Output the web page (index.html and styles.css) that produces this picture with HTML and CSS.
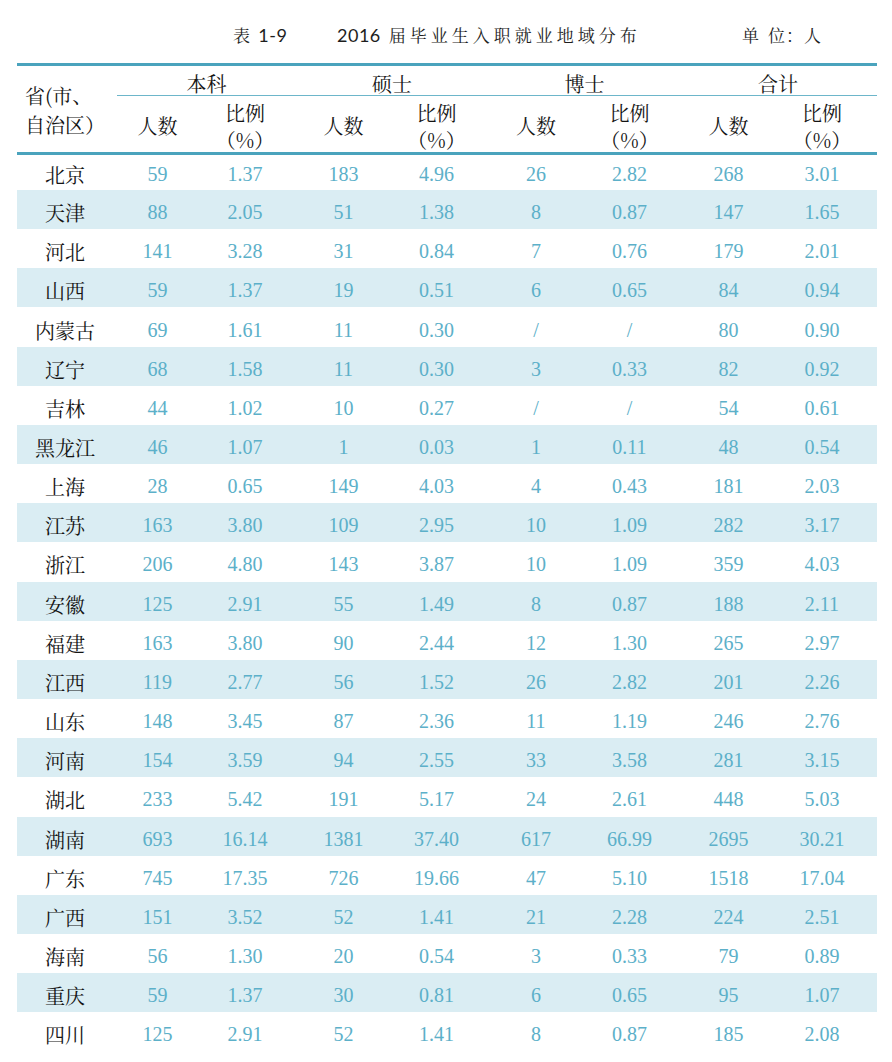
FILE: index.html
```html
<!DOCTYPE html>
<html lang="zh-CN">
<head>
<meta charset="utf-8">
<title>表 1-9 2016 届毕业生入职就业地域分布</title>
<link rel="stylesheet" href="styles.css">
</head>
<body>
<div class="page">
  <div class="title">
    <span class="t-no"><span class="cjk">表</span> <span class="lat">1-9</span></span>
    <span class="t-main"><span class="lat yr">2016</span><span class="cjk">届毕业生入职就业地域分布</span></span>
    <span class="t-unit"><span class="u1">单</span>位：人</span>
  </div>
  <div class="table">
    <div class="grid head">
      <div class="corner"><div class="corner-txt">省(市、<br>自治区）</div></div>
      <div class="grp g1">本科</div>
      <div class="grp g2">硕士</div>
      <div class="grp g3">博士</div>
      <div class="grp g4">合计</div>
      <div class="sub c1">人数</div><div class="sub c2">比例<br>（%）</div>
      <div class="sub c3">人数</div><div class="sub c4">比例<br>（%）</div>
      <div class="sub c5">人数</div><div class="sub c6">比例<br>（%）</div>
      <div class="sub c7">人数</div><div class="sub c8">比例<br>（%）</div>
    </div>
    <div class="rows">
      <div class="grid row"><div class="n">北京</div><div class="v c1">59</div><div class="v c2">1.37</div><div class="v c3">183</div><div class="v c4">4.96</div><div class="v c5">26</div><div class="v c6">2.82</div><div class="v c7">268</div><div class="v c8">3.01</div></div>
      <div class="grid row"><div class="n">天津</div><div class="v c1">88</div><div class="v c2">2.05</div><div class="v c3">51</div><div class="v c4">1.38</div><div class="v c5">8</div><div class="v c6">0.87</div><div class="v c7">147</div><div class="v c8">1.65</div></div>
      <div class="grid row"><div class="n">河北</div><div class="v c1">141</div><div class="v c2">3.28</div><div class="v c3">31</div><div class="v c4">0.84</div><div class="v c5">7</div><div class="v c6">0.76</div><div class="v c7">179</div><div class="v c8">2.01</div></div>
      <div class="grid row"><div class="n">山西</div><div class="v c1">59</div><div class="v c2">1.37</div><div class="v c3">19</div><div class="v c4">0.51</div><div class="v c5">6</div><div class="v c6">0.65</div><div class="v c7">84</div><div class="v c8">0.94</div></div>
      <div class="grid row"><div class="n">内蒙古</div><div class="v c1">69</div><div class="v c2">1.61</div><div class="v c3">11</div><div class="v c4">0.30</div><div class="v c5">/</div><div class="v c6">/</div><div class="v c7">80</div><div class="v c8">0.90</div></div>
      <div class="grid row"><div class="n">辽宁</div><div class="v c1">68</div><div class="v c2">1.58</div><div class="v c3">11</div><div class="v c4">0.30</div><div class="v c5">3</div><div class="v c6">0.33</div><div class="v c7">82</div><div class="v c8">0.92</div></div>
      <div class="grid row"><div class="n">吉林</div><div class="v c1">44</div><div class="v c2">1.02</div><div class="v c3">10</div><div class="v c4">0.27</div><div class="v c5">/</div><div class="v c6">/</div><div class="v c7">54</div><div class="v c8">0.61</div></div>
      <div class="grid row"><div class="n">黑龙江</div><div class="v c1">46</div><div class="v c2">1.07</div><div class="v c3">1</div><div class="v c4">0.03</div><div class="v c5">1</div><div class="v c6">0.11</div><div class="v c7">48</div><div class="v c8">0.54</div></div>
      <div class="grid row"><div class="n">上海</div><div class="v c1">28</div><div class="v c2">0.65</div><div class="v c3">149</div><div class="v c4">4.03</div><div class="v c5">4</div><div class="v c6">0.43</div><div class="v c7">181</div><div class="v c8">2.03</div></div>
      <div class="grid row"><div class="n">江苏</div><div class="v c1">163</div><div class="v c2">3.80</div><div class="v c3">109</div><div class="v c4">2.95</div><div class="v c5">10</div><div class="v c6">1.09</div><div class="v c7">282</div><div class="v c8">3.17</div></div>
      <div class="grid row"><div class="n">浙江</div><div class="v c1">206</div><div class="v c2">4.80</div><div class="v c3">143</div><div class="v c4">3.87</div><div class="v c5">10</div><div class="v c6">1.09</div><div class="v c7">359</div><div class="v c8">4.03</div></div>
      <div class="grid row"><div class="n">安徽</div><div class="v c1">125</div><div class="v c2">2.91</div><div class="v c3">55</div><div class="v c4">1.49</div><div class="v c5">8</div><div class="v c6">0.87</div><div class="v c7">188</div><div class="v c8">2.11</div></div>
      <div class="grid row"><div class="n">福建</div><div class="v c1">163</div><div class="v c2">3.80</div><div class="v c3">90</div><div class="v c4">2.44</div><div class="v c5">12</div><div class="v c6">1.30</div><div class="v c7">265</div><div class="v c8">2.97</div></div>
      <div class="grid row"><div class="n">江西</div><div class="v c1">119</div><div class="v c2">2.77</div><div class="v c3">56</div><div class="v c4">1.52</div><div class="v c5">26</div><div class="v c6">2.82</div><div class="v c7">201</div><div class="v c8">2.26</div></div>
      <div class="grid row"><div class="n">山东</div><div class="v c1">148</div><div class="v c2">3.45</div><div class="v c3">87</div><div class="v c4">2.36</div><div class="v c5">11</div><div class="v c6">1.19</div><div class="v c7">246</div><div class="v c8">2.76</div></div>
      <div class="grid row"><div class="n">河南</div><div class="v c1">154</div><div class="v c2">3.59</div><div class="v c3">94</div><div class="v c4">2.55</div><div class="v c5">33</div><div class="v c6">3.58</div><div class="v c7">281</div><div class="v c8">3.15</div></div>
      <div class="grid row"><div class="n">湖北</div><div class="v c1">233</div><div class="v c2">5.42</div><div class="v c3">191</div><div class="v c4">5.17</div><div class="v c5">24</div><div class="v c6">2.61</div><div class="v c7">448</div><div class="v c8">5.03</div></div>
      <div class="grid row"><div class="n">湖南</div><div class="v c1">693</div><div class="v c2">16.14</div><div class="v c3">1381</div><div class="v c4">37.40</div><div class="v c5">617</div><div class="v c6">66.99</div><div class="v c7">2695</div><div class="v c8">30.21</div></div>
      <div class="grid row"><div class="n">广东</div><div class="v c1">745</div><div class="v c2">17.35</div><div class="v c3">726</div><div class="v c4">19.66</div><div class="v c5">47</div><div class="v c6">5.10</div><div class="v c7">1518</div><div class="v c8">17.04</div></div>
      <div class="grid row"><div class="n">广西</div><div class="v c1">151</div><div class="v c2">3.52</div><div class="v c3">52</div><div class="v c4">1.41</div><div class="v c5">21</div><div class="v c6">2.28</div><div class="v c7">224</div><div class="v c8">2.51</div></div>
      <div class="grid row"><div class="n">海南</div><div class="v c1">56</div><div class="v c2">1.30</div><div class="v c3">20</div><div class="v c4">0.54</div><div class="v c5">3</div><div class="v c6">0.33</div><div class="v c7">79</div><div class="v c8">0.89</div></div>
      <div class="grid row"><div class="n">重庆</div><div class="v c1">59</div><div class="v c2">1.37</div><div class="v c3">30</div><div class="v c4">0.81</div><div class="v c5">6</div><div class="v c6">0.65</div><div class="v c7">95</div><div class="v c8">1.07</div></div>
      <div class="grid row"><div class="n">四川</div><div class="v c1">125</div><div class="v c2">2.91</div><div class="v c3">52</div><div class="v c4">1.41</div><div class="v c5">8</div><div class="v c6">0.87</div><div class="v c7">185</div><div class="v c8">2.08</div></div>
    </div>
  </div>
</div>
</body>
</html>
```

FILE: styles.css
```css
* { box-sizing: border-box; }
html, body { margin: 0; padding: 0; background: #ffffff; }
body {
  font-family: "Noto Serif CJK SC", "Noto Sans CJK SC", serif;
  color: #141414;
}
.page { width: 892px; }

/* title line */
.title {
  height: 63px;
  padding: 6px 0 0 233px;
  display: flex;
  align-items: center;
  font-size: 17px;
  color: #1e1e1e;
}
.title .cjk { letter-spacing: 4px; }
.title .lat { font-family: "Lato", "DejaVu Sans", sans-serif; font-size: 18px; letter-spacing: 0.5px; }
.title .yr { margin-right: 8px; }
.t-no { width: 104px; white-space: nowrap; }
.t-main { width: 405px; white-space: nowrap; }
.t-unit { white-space: nowrap; letter-spacing: 1px; }
.u1 { margin-right: 8px; }

/* table */
.table {
  margin-left: 17px;
  width: 860px;
  border-top: 3px solid #4aa3bd;
}
.grid {
  display: grid;
  grid-template-columns: 96px 89px 92px 96px 96px 97px 96px 96px 102px;
}
.head {
  grid-template-rows: 30px 56px;
  border-bottom: 3px solid #4aa3bd;
  font-size: 20px;
}
.corner {
  grid-row: 1 / 3;
  grid-column: 1;
  display: flex;
  align-items: center;
  justify-content: center;
  padding-top: 3px;
}
.corner-txt { line-height: 28.5px; text-align: left; }
.grp {
  grid-row: 1;
  border-bottom: 1px solid #6db6ca;
  text-align: center;
  line-height: 29px;
  padding-top: 3px;
}
.g1 { grid-column: 2 / 4; margin-left: 4px; padding-left: 2px; }
.g2 { grid-column: 4 / 6; padding-left: 4px; }
.g3 { grid-column: 6 / 8; padding-left: 4px; }
.g4 { grid-column: 8 / 10; }
.sub {
  grid-row: 2;
  display: flex;
  align-items: center;
  justify-content: center;
  text-align: center;
  line-height: 27px;
  padding-top: 3px;
}

/* body rows */
.row {
  height: 39.165px;
  padding-top: 6px;
  align-items: center;
  font-size: 20px;
}
.row:first-child { height: 35px; padding-top: 3px; }
.row:nth-child(even) { background: #daedf3; }
.n { text-align: center; color: #141414; }
.v {
  text-align: center;
  font-family: "Liberation Serif", "DejaVu Serif", serif;
  color: #5cb0c9;
}

/* column centring tweaks */
.c2 { padding-right: 6px; }
.c3 { padding-left: 3px; }
.c4 { padding-right: 3px; }
.c5 { padding-left: 3px; }
.c6 { padding-right: 3px; }
.c7 { padding-left: 3px; }
.c8 { padding-right: 8px; }
```
